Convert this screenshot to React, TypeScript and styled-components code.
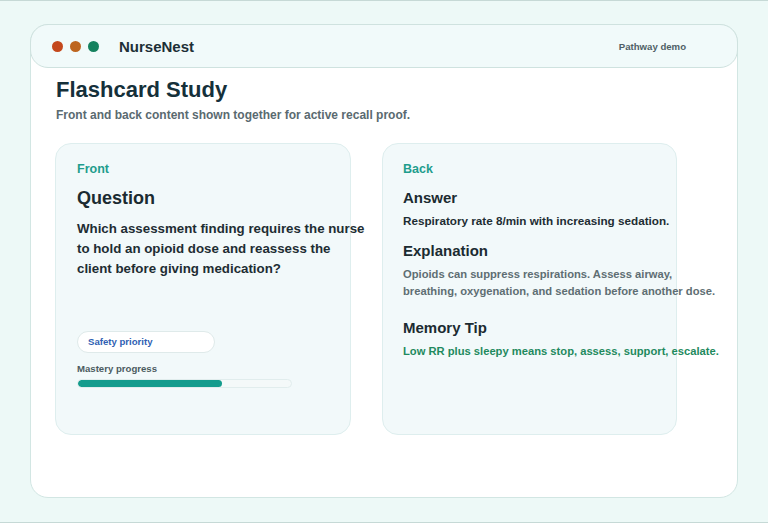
import React from 'react'
import styled, { createGlobalStyle } from 'styled-components'

const GlobalStyle = createGlobalStyle`
  html, body {
    margin: 0;
    padding: 0;
  }
  body {
    font-family: "Liberation Sans", Arial, sans-serif;
    background: #edf9f7;
    color: #1b2b31;
  }
`

const dots = ['#c4481c', '#bd651f', '#15825f']

const Frame = styled.div`
  box-sizing: border-box;
  height: 523px;
  border-top: 1px solid #c6d9d6;
  border-bottom: 1px solid #c6d9d6;
  padding: 23px 30px 0;
  background: #edf9f7;
`

const Window = styled.div`
  box-sizing: border-box;
  width: 708px;
  height: 474px;
  background: #ffffff;
  border: 1px solid #d2e6e3;
  border-radius: 18px;
  display: flex;
  flex-direction: column;
`

const Header = styled.header`
  box-sizing: border-box;
  height: 44px;
  margin: -1px -1px 0;
  padding: 0 51px 0 21px;
  display: flex;
  align-items: center;
  background: #f1fafa;
  border: 1px solid #cfe2df;
  border-radius: 18px;
`

const Dots = styled.div`
  display: flex;
  gap: 7px;
  margin-right: 20px;
`

const Dot = styled.span<{ $color: string }>`
  width: 11px;
  height: 11px;
  border-radius: 50%;
  background: ${(p) => p.$color};
`

const Brand = styled.div`
  font-size: 15px;
  font-weight: 700;
  color: #1d2f36;
`

const HeaderNote = styled.div`
  margin-left: auto;
  font-size: 9.6px;
  font-weight: 700;
  color: #4f5f66;
`

const Body = styled.main`
  padding: 9px 24px 0;
`

const Title = styled.h1`
  margin: 0 0 0 1px;
  font-size: 22px;
  line-height: 26px;
  font-weight: 700;
  color: #15303a;
`

const Subtitle = styled.p`
  margin: 5px 0 0 1px;
  font-size: 12px;
  line-height: 14px;
  font-weight: 700;
  color: #5a6a70;
`

const Cards = styled.div`
  margin-top: 21px;
  display: flex;
  gap: 31px;
`

const Card = styled.section<{ $width: number; $inset: number }>`
  box-sizing: border-box;
  width: ${(p) => p.$width}px;
  height: 292px;
  padding: 18px ${(p) => p.$inset}px;
  background: #f2f9fa;
  border: 1px solid #deeeee;
  border-radius: 16px;
`

const Side = styled.div`
  font-size: 12.5px;
  line-height: 15px;
  font-weight: 700;
  color: #1f9d8d;
`

const BigHeading = styled.h2`
  margin: 11px 0 0;
  font-size: 18px;
  line-height: 21.6px;
  font-weight: 700;
  color: #1b2b31;
`

const QuestionText = styled.p`
  width: 290px;
  margin: 9px 0 0;
  font-size: 13.3px;
  line-height: 20px;
  font-weight: 700;
  color: #1e2d33;
`

const Pill = styled.div`
  box-sizing: border-box;
  width: 138px;
  height: 22px;
  margin-top: 52px;
  padding-left: 10px;
  display: flex;
  align-items: center;
  background: #ffffff;
  border: 1px solid #dfeaea;
  border-radius: 11px;
  font-size: 9.6px;
  font-weight: 700;
  color: #2f5fb3;
`

const ProgressLabel = styled.div`
  margin-top: 10px;
  font-size: 9.6px;
  line-height: 12px;
  font-weight: 700;
  color: #4b5b60;
`

const Track = styled.div`
  box-sizing: border-box;
  width: 215px;
  height: 9px;
  margin-top: 4px;
  border-radius: 5px;
  background: #f4f9f9;
  border: 1px solid #e1eded;
  overflow: hidden;
`

const Fill = styled.div`
  height: 100%;
  background: #149c8d;
  border-radius: 5px;
`

const Block = styled.div<{ $top: number }>`
  margin-top: ${(p) => p.$top}px;
`

const Heading = styled.h3`
  margin: 0;
  font-size: 15px;
  line-height: 18px;
  font-weight: 700;
  color: #1b2b31;
`

const Detail = styled.p<{ $tone: 'dark' | 'muted' | 'green' }>`
  width: 318px;
  margin: 6px 0 0;
  font-size: ${(p) => (p.$tone === 'dark' ? '11.7px' : '11.2px')};
  line-height: ${(p) => (p.$tone === 'dark' ? '16px' : '17px')};
  font-weight: 700;
  color: ${(p) =>
    p.$tone === 'dark' ? '#1e2d33' : p.$tone === 'green' ? '#1f8a5e' : '#5e6e73'};
`

export default function App() {
  const mastery = 67.5

  return (
    <>
      <GlobalStyle />
      <Frame>
        <Window>
          <Header>
            <Dots>
              {dots.map((c) => (
                <Dot key={c} $color={c} />
              ))}
            </Dots>
            <Brand>NurseNest</Brand>
            <HeaderNote>Pathway demo</HeaderNote>
          </Header>
          <Body>
            <Title>Flashcard Study</Title>
            <Subtitle>Front and back content shown together for active recall proof.</Subtitle>
            <Cards>
              <Card $width={296} $inset={21}>
                <Side>Front</Side>
                <BigHeading>Question</BigHeading>
                <QuestionText>
                  Which assessment finding requires the nurse to hold an opioid dose and reassess
                  the client before giving medication?
                </QuestionText>
                <Pill>Safety priority</Pill>
                <ProgressLabel>Mastery progress</ProgressLabel>
                <Track>
                  <Fill style={{ width: `${mastery}%` }} />
                </Track>
              </Card>
              <Card $width={295} $inset={20}>
                <Side>Back</Side>
                <Block $top={12}>
                  <Heading>Answer</Heading>
                  <Detail $tone="dark">Respiratory rate 8/min with increasing sedation.</Detail>
                </Block>
                <Block $top={13}>
                  <Heading>Explanation</Heading>
                  <Detail $tone="muted">
                    Opioids can suppress respirations. Assess airway, breathing, oxygenation, and
                    sedation before another dose.
                  </Detail>
                </Block>
                <Block $top={19}>
                  <Heading>Memory Tip</Heading>
                  <Detail $tone="green">
                    Low RR plus sleepy means stop, assess, support, escalate.
                  </Detail>
                </Block>
              </Card>
            </Cards>
          </Body>
        </Window>
      </Frame>
    </>
  )
}
